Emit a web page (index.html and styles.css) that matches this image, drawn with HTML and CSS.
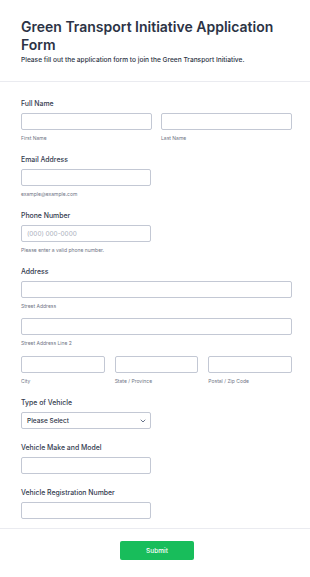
FILE: index.html
```html
<!DOCTYPE html>
<html lang="en">
<head>
    <meta charset="UTF-8">
    <meta name="viewport" content="width=device-width, initial-scale=1.0">
    <title>Green Transport Initiative Application Form</title>
    <link rel="stylesheet" href="styles.css">
</head>
<body>
    <form class="form">
        <div class="form-header">
            <h1 class="form-title">Green Transport Initiative Application Form</h1>
            <p class="form-subtitle">Please fill out the application form to join the Green Transport Initiative.</p>
        </div>

        <div class="form-body">
            <div class="field">
                <label class="field-label">Full Name</label>
                <div class="row two">
                    <div class="col">
                        <input class="input" type="text">
                        <span class="sublabel">First Name</span>
                    </div>
                    <div class="col">
                        <input class="input" type="text">
                        <span class="sublabel">Last Name</span>
                    </div>
                </div>
            </div>

            <div class="field">
                <label class="field-label">Email Address</label>
                <input class="input half" type="email">
                <span class="sublabel">example@example.com</span>
            </div>

            <div class="field">
                <label class="field-label">Phone Number</label>
                <input class="input half" type="tel" placeholder="(000) 000-0000">
                <span class="sublabel">Please enter a valid phone number.</span>
            </div>

            <div class="field address">
                <label class="field-label">Address</label>
                <input class="input" type="text">
                <span class="sublabel">Street Address</span>
                <input class="input" type="text">
                <span class="sublabel">Street Address Line 2</span>
                <div class="row three">
                    <div class="col">
                        <input class="input" type="text">
                        <span class="sublabel">City</span>
                    </div>
                    <div class="col">
                        <input class="input" type="text">
                        <span class="sublabel">State / Province</span>
                    </div>
                    <div class="col">
                        <input class="input" type="text">
                        <span class="sublabel">Postal / Zip Code</span>
                    </div>
                </div>
            </div>

            <div class="field no-sub">
                <label class="field-label">Type of Vehicle</label>
                <div class="select half">
                    <span>Please Select</span>
                    <svg class="chevron" width="6" height="4" viewBox="0 0 6 4" fill="none" stroke="#57647e" stroke-width="0.9" stroke-linecap="round" stroke-linejoin="round">
                        <polyline points="1 1 3 3 5 1"></polyline>
                    </svg>
                </div>
            </div>

            <div class="field no-sub">
                <label class="field-label">Vehicle Make and Model</label>
                <input class="input half" type="text">
            </div>

            <div class="field no-sub">
                <label class="field-label">Vehicle Registration Number</label>
                <input class="input half" type="text">
            </div>
        </div>

        <div class="form-footer">
            <button type="button" class="submit-btn">Submit</button>
        </div>
    </form>
</body>
</html>
```

FILE: styles.css
```css
body, html {
    font-family: Inter, 'Noto Sans', sans-serif;
    background-color: #ffffff;
    color: #2c3345;
    margin: 0;
    padding: 0;
}
.form {
    width: 310px;
}
.form-header {
    padding: 18px 18px 16px 21px;
    border-bottom: 1px solid #eaebf0;
}
.form-title {
    font-size: 14px;
    line-height: 18px;
    font-weight: 600;
    margin: 0;
    color: #2c3345;
}
.form-subtitle {
    font-size: 6.6px;
    line-height: 10px;
    font-weight: 500;
    margin: 1px 0 0;
}
.form-body {
    padding: 17px 18px 9px 21px;
}
.field {
    display: flex;
    flex-direction: column;
    margin-bottom: 13px;
}
.field.no-sub {
    margin-bottom: 14px;
}
.field:last-child {
    margin-bottom: 0;
}
.field-label {
    font-size: 6.9px;
    line-height: 10px;
    font-weight: 500;
    color: #343b4f;
    margin-bottom: 4px;
}
.input {
    box-sizing: border-box;
    width: 100%;
    height: 17px;
    border: 1px solid #c3c8d4;
    border-radius: 2px;
    padding: 0 5px;
    font-family: inherit;
    font-size: 6.4px;
    color: #2c3345;
    background: #fff;
    margin: 0;
}
.input::placeholder {
    color: #a9aebb;
}
.half {
    width: 130px;
}
.sublabel {
    font-size: 5px;
    line-height: 8px;
    color: #6f7585;
    margin-top: 4px;
}
.address .sublabel {
    margin-bottom: 8px;
}
.address .row .sublabel {
    margin-bottom: 0;
}
.row {
    display: grid;
    gap: 9px;
}
.row.two {
    grid-template-columns: 1fr 1fr;
}
.row.three {
    grid-template-columns: 1fr 1fr 1fr;
    gap: 10px;
    margin-top: 1px;
}
.col {
    display: flex;
    flex-direction: column;
}
.select {
    box-sizing: border-box;
    height: 17px;
    border: 1px solid #c3c8d4;
    border-radius: 2px;
    padding: 0 4px 0 5px;
    display: flex;
    align-items: center;
    justify-content: space-between;
    font-size: 6.5px;
    font-weight: 500;
}
.form-footer {
    border-top: 1px solid #eaebf0;
    padding: 12px 0 20px 4px;
    display: flex;
    justify-content: center;
}
.submit-btn {
    width: 74px;
    height: 19px;
    background-color: #18bd5b;
    color: #ffffff;
    border: none;
    border-radius: 2px;
    font-family: inherit;
    font-size: 6.5px;
    font-weight: 500;
    cursor: pointer;
}
```
